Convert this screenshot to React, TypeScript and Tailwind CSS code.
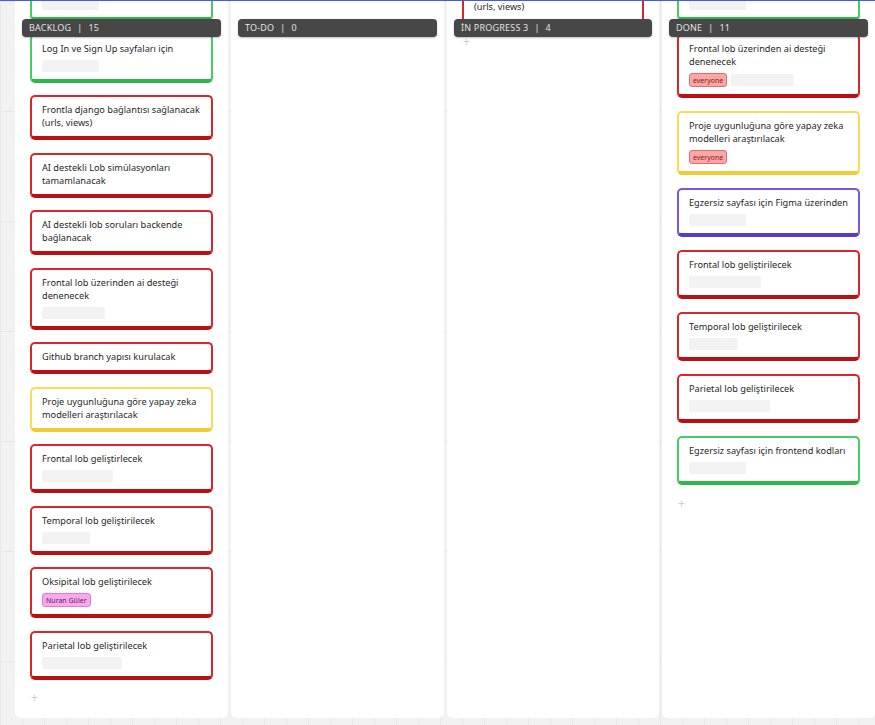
import React from 'react';

type Tone = 'red' | 'green' | 'yellow' | 'purple';

type Card = {
  title?: string;
  tag?: 'everyone' | 'nuran';
  placeholder?: string;
  tone: Tone;
};

const toneClass: Record<Tone, string> = {
  red: 'border-[#d7272c] border-b-[#bb0f14]',
  green: 'border-[#43cf5f] border-b-[#2db64a]',
  yellow: 'border-[#f6dc58] border-b-[#efcb38]',
  purple: 'border-[#7b56e6] border-b-[#5c39c9]',
};

const Tag = ({ kind }: { kind: 'everyone' | 'nuran' }) =>
  kind === 'everyone' ? (
    <span className="inline-flex h-[14px] items-center rounded-[3px] border border-[#e56a6a] bg-[#f9a7a7] px-[3px] text-[7px] leading-none text-[#8c1c1c]">
      everyone
    </span>
  ) : (
    <span className="inline-flex h-[14px] items-center rounded-[3px] border border-[#e27bd8] bg-[#f8a9ee] px-[3px] text-[7px] leading-none text-[#5c245a]">
      Nuran Güler
    </span>
  );

const TaskCard = ({ card }: { card: Card }) => (
  <div
    className={`rounded-[5px] border-2 border-b-4 bg-white px-[10px] pt-[6px] pb-[7px] ${toneClass[card.tone]}`}
  >
    {card.title && <p className="text-[9.2px] leading-[13px] text-[#1f1f1f]">{card.title}</p>}
    {(card.tag || card.placeholder) && (
      <div className={`flex items-center gap-[4px] ${card.title ? 'mt-[5px]' : ''}`}>
        {card.tag && <Tag kind={card.tag} />}
        {card.placeholder && <div className={`h-[12px] rounded-[2px] bg-[#f3f3f3] ${card.placeholder}`} />}
      </div>
    )}
  </div>
);

const backlog: Card[] = [
  { tone: 'green', placeholder: 'w-[57px]' },
  { tone: 'green', title: 'Log In ve Sign Up sayfaları için', placeholder: 'w-[57px]' },
  { tone: 'red', title: 'Frontla django bağlantısı sağlanacak (urls, views)' },
  { tone: 'red', title: 'AI destekli Lob simülasyonları tamamlanacak' },
  { tone: 'red', title: 'AI destekli lob soruları backende bağlanacak' },
  { tone: 'red', title: 'Frontal lob üzerinden ai desteği denenecek', placeholder: 'w-[63px]' },
  { tone: 'red', title: 'Github branch yapısı kurulacak' },
  { tone: 'yellow', title: 'Proje uygunluğuna göre yapay zeka modelleri araştırılacak' },
  { tone: 'red', title: 'Frontal lob geliştirlecek', placeholder: 'w-[71px]' },
  { tone: 'red', title: 'Temporal lob geliştirilecek', placeholder: 'w-[48px]' },
  { tone: 'red', title: 'Oksipital lob geliştirilecek', tag: 'nuran' },
  { tone: 'red', title: 'Parietal lob geliştirilecek', placeholder: 'w-[80px]' },
];

const inProgress: Card[] = [
  { tone: 'red', title: 'Frontla django bağlantısı sağlanacak (urls, views)' },
];

const done: Card[] = [
  { tone: 'green', placeholder: 'w-[57px]' },
  { tone: 'red', title: 'Frontal lob üzerinden ai desteği denenecek', tag: 'everyone', placeholder: 'w-[63px]' },
  { tone: 'yellow', title: 'Proje uygunluğuna göre yapay zeka modelleri araştırılacak', tag: 'everyone' },
  { tone: 'purple', title: 'Egzersiz sayfası için Figma üzerinden', placeholder: 'w-[57px]' },
  { tone: 'red', title: 'Frontal lob geliştirilecek', placeholder: 'w-[72px]' },
  { tone: 'red', title: 'Temporal lob geliştirilecek', placeholder: 'w-[49px]' },
  { tone: 'red', title: 'Parietal lob geliştirilecek', placeholder: 'w-[81px]' },
  { tone: 'green', title: 'Egzersiz sayfası için frontend kodları', placeholder: 'w-[57px]' },
];

const Column = ({
  name,
  count,
  cards,
  list,
  showAdd,
}: {
  name: string;
  count: number;
  cards: Card[];
  list: string;
  showAdd: boolean;
}) => (
  <div className="relative h-[717px] overflow-hidden rounded-b-[6px] bg-white">
    <div className="absolute top-[18px] right-[7px] left-[7px] z-10 flex h-[18px] items-center rounded-[4px] bg-[#474747] px-[7px] text-[9px] tracking-[0.2px] text-[#e2e2e2] shadow-[0_1px_2px_rgba(0,0,0,0.25)]">
      {name}
      <span className="px-[6px]">|</span>
      {count}
    </div>
    <div className={`flex flex-col px-[15px] ${list}`}>
      {cards.map((c, i) => (
        <TaskCard key={i} card={c} />
      ))}
      {showAdd && <div className="pl-[1px] text-[12px] leading-[12px] text-[#cfcfcf]">+</div>}
    </div>
  </div>
);

export default function App() {
  return (
    <div
      className="h-[725px] w-[875px] overflow-hidden border-t border-[#3b5bfb] bg-[#f2f2f2] bg-[linear-gradient(#e8e8e8_1px,transparent_1px),linear-gradient(90deg,#e8e8e8_1px,transparent_1px)] bg-[size:22px_110px]"
      style={{ fontFamily: '"Noto Sans", "Open Sans", sans-serif' }}
    >
      <div className="grid grid-cols-[213px_213px_212px_213px] gap-[3px] pl-[15px]">
        <Column name="BACKLOG" count={15} cards={backlog} list="-mt-[11px] gap-[12.5px]" showAdd />
        <Column name="TO-DO" count={0} cards={[]} list="" showAdd={false} />
        <Column name="İN PROGRESS 3" count={4} cards={inProgress} list="-mt-[22px] gap-[12px]" showAdd />
        <Column name="DONE" count={11} cards={done} list="-mt-[11px] gap-[13px]" showAdd />
      </div>
    </div>
  );
}
